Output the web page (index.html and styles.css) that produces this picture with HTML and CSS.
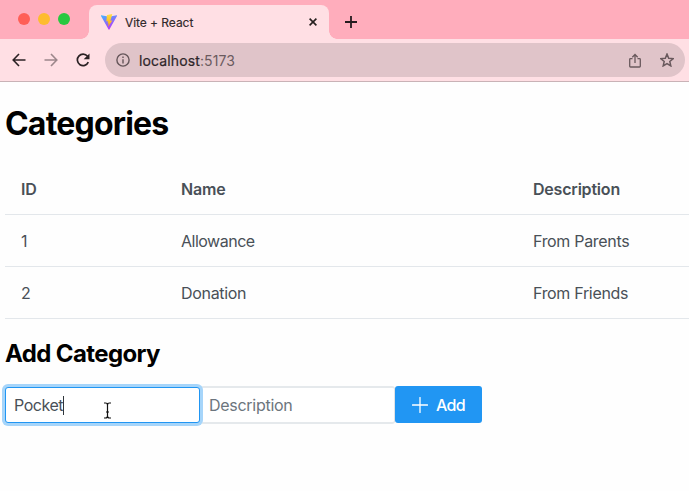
FILE: index.html
```html
<!DOCTYPE html>
<html lang="en">
<head>
<meta charset="utf-8">
<title>Vite + React</title>
<link rel="stylesheet" href="styles.css">
</head>
<body>
<header class="browser">
  <div class="tabstrip">
    <div class="lights"><i class="red"></i><i class="yellow"></i><i class="green"></i></div>
    <div class="tab">
      <svg class="favicon" width="16" height="16" viewBox="0 0 16 16">
        <defs><linearGradient id="v" x1="0" y1="0" x2=".5" y2="1"><stop stop-color="#41b8ff"/><stop offset="1" stop-color="#b837fc"/></linearGradient>
        <linearGradient id="b" x1="0" y1="0" x2="0" y2="1"><stop stop-color="#ffe04a"/><stop offset="1" stop-color="#ffa800"/></linearGradient></defs>
        <path fill="url(#v)" d="M.3 1.3 8 2.7l7.7-1.4c.3 0 .5.3.3.6L8.4 15.4c-.2.3-.6.3-.8 0L0 1.9c-.1-.3 0-.6.3-.6z"/>
        <path fill="url(#b)" d="M11.3.1 6 1.1 5.3 7.500l1.900-.3-.7 2.4 1.2-.3-.8 3.7 4.500-6.500-2 .3z"/>
      </svg>
      <span class="tab-title">Vite + React</span>
      <svg class="close" width="8" height="8" viewBox="0 0 8 8"><path d="M.6.6l6.8 6.8M7.4.6.6 7.4" stroke="#26201f" stroke-width="1.6"/></svg>
    </div>
    <svg class="new-tab" width="12" height="12" viewBox="0 0 12 12"><path d="M6 0v12M0 6h12" stroke="#251b1e" stroke-width="1.8"/></svg>
  </div>
  <div class="toolbar">
    <svg class="nav" width="14" height="14" viewBox="0 0 14 14"><path d="M13.5 7H1.5M7 1 1.2 7 7 13" fill="none" stroke="#2b2224" stroke-width="1.6"/></svg>
    <svg class="nav" width="14" height="14" viewBox="0 0 14 14"><path d="M.5 7h12M7 1l5.800 6L7 13" fill="none" stroke="#9c878b" stroke-width="1.6"/></svg>
    <svg class="nav" width="14" height="14" viewBox="0 0 14 14"><path d="M12.300 9.200A5.700 5.700 0 1 1 11.500 3.300" fill="none" stroke="#2b2224" stroke-width="1.7"/><path d="M13.500.5v5.800H7.700z" fill="#2b2224"/></svg>
    <div class="address">
      <svg width="14" height="14" viewBox="0 0 14 14"><circle cx="7" cy="7" r="6.100" fill="none" stroke="#65565a" stroke-width="1.400"/><path d="M7 6.200v4.300M7 3.500v1.400" stroke="#65565a" stroke-width="1.400"/></svg>
      <span class="url"><b>localhost</b>:5173</span>
      <svg class="share" width="12" height="15" viewBox="0 0 12 15"><path d="M3.500 5.600h-2a.8.800 0 0 0-.8.800v6.800c0 .5.300.800.800.800h9c.5 0 .8-.3.800-.8V6.400a.8.800 0 0 0-.8-.8h-2M6 10V1.500M3.300 4.200 6 1.500l2.700 2.700" fill="none" stroke="#69595d" stroke-width="1.300"/></svg>
      <svg width="14" height="14" viewBox="0 0 14 14"><path d="M7 1.100l1.700 4.100 4.500.4-3.400 2.900 1 4.400L7 10.600l-3.800 2.300 1-4.400L.8 5.600l4.500-.4z" fill="none" stroke="#69595d" stroke-width="1.500"/></svg>
    </div>
  </div>
</header>
<main class="page">
  <h1>Categories</h1>
  <table>
    <thead><tr><th class="id">ID</th><th class="name">Name</th><th>Description</th></tr></thead>
    <tbody>
      <tr><td>1</td><td class="tight">Allowance</td><td>From Parents</td></tr>
      <tr><td>2</td><td>Donation</td><td>From Friends</td></tr>
    </tbody>
  </table>
  <h2>Add Category</h2>
  <div class="form">
    <div class="field focused"><span>Pocket</span><i class="caret"></i>
      <svg class="pointer" width="9" height="17" viewBox="0 0 9 17"><path d="M1 1h1.500Q4.500 1 4.500 3v11q0 2-2 2H1M8 1H6.500Q4.500 1 4.500 3v11q0 2 2 2H8M3 10h3" fill="none" stroke="#fff" stroke-width="2.500"/><path d="M1 1h1.500Q4.500 1 4.500 3v11q0 2-2 2H1M8 1H6.500Q4.500 1 4.500 3v11q0 2 2 2H8M3 10h3" fill="none" stroke="#111" stroke-width="1.200"/></svg>
    </div>
    <div class="field placeholder"><span>Description</span></div>
    <button class="add"><svg width="16" height="16" viewBox="0 0 16 16"><path d="M8 .5v15M.5 8h15" stroke="#fff" stroke-width="1.300" stroke-linecap="round"/></svg><span>Add</span></button>
  </div>
</main>
</body>
</html>
```
FILE: styles.css
```css
* { box-sizing: border-box; }
body { margin: 0; width: 689px; height: 491px; overflow: hidden; background: #fefefe; font-family: Inter, "Liberation Sans", sans-serif; }
svg { display: block; flex: none; }
.browser { height: 82px; background: #ffdfe4; border-bottom: 1px solid #c9b2b6; }
.tabstrip { display: flex; height: 39px; background: #ffadbc; }
.lights { display: flex; gap: 8px; padding: 12px 0 0 18px; width: 89px; }
.lights i { width: 12px; height: 12px; margin-top: .5px; border-radius: 50%; }
.red { background: #ff5f57; }
.yellow { background: #febc2e; }
.green { background: #28c840; }
.tab { position: relative; display: flex; align-items: center; width: 240px; height: 34px; margin-top: 5px; padding: 0 12px; border-radius: 8px 8px 0 0; background: #ffdfe4; }
.tab::before, .tab::after { content: ""; position: absolute; bottom: 0; width: 8px; height: 8px; }
.tab::before { left: -8px; background: radial-gradient(circle at 0 0, #ffadbc 7.500px, #ffdfe4 8px); }
.tab::after { right: -8px; background: radial-gradient(circle at 100% 0, #ffadbc 7.500px, #ffdfe4 8px); }
.tab-title { margin-left: 8px; font-size: 12px; letter-spacing: -.05px; color: #30282a; -webkit-text-stroke: .15px #30282a; }
.close { margin-left: auto; }
.new-tab { margin: 16px 0 0 16px; }
.toolbar { display: flex; align-items: center; height: 42px; padding: 0 4px 0 12px; }
.nav { margin-right: 18px; }
.nav:nth-child(3) { margin-right: 15px; }
.address { display: flex; align-items: center; flex: 1; height: 34px; padding: 0 11px; border-radius: 17px; background: #e0c4c9; }
.url { margin-left: 9px; font-size: 14px; letter-spacing: .12px; color: #6b5b5f; }
.url b { font-weight: 400; color: #2e2629; -webkit-text-stroke: .2px #2e2629; }
.share { margin: 0 19px 0 auto; }
.page { padding: 22px 0 0 5px; }
h1 { margin: 0 0 20px; font-size: 32px; line-height: 39px; font-weight: 700; letter-spacing: -.8px; color: #000; }
table { width: 100%; table-layout: fixed; border-collapse: separate; border-spacing: 0; font-size: 16px; line-height: 19px; color: #495057; }
th, td { height: 52px; padding: 2px 16px 0; text-align: left; border-bottom: 1px solid #e3e7eb; }
th { font-weight: 600; letter-spacing: -.2px; }
td { letter-spacing: -.32px; }
.tight { letter-spacing: -.5px; }
.id { width: 160px; }
.name { width: 352px; }
h2 { margin: 20px 0 18px; font-size: 24px; line-height: 29px; font-weight: 700; letter-spacing: -.62px; color: #000; }
.form { display: flex; align-items: flex-start; height: 38px; font-size: 16px; letter-spacing: -.28px; color: #495057; }
.field { position: relative; display: flex; align-items: center; width: 195px; height: 38px; padding: 0 8px; border: 1px solid #dfe3e7; border-width: 2px 1px; border-color: #e5e9ec #dfe3e7; border-radius: 3px; background: #fff; }
.focused { z-index: 1; height: 36px; margin-top: 1px; border: 1px solid #2196f3; letter-spacing: -.45px; box-shadow: 0 0 0 3px #a6d5fa; }
.placeholder { color: #6c757d; }
.caret { width: 1px; height: 19px; background: #30363b; }
.pointer { position: absolute; left: 97px; top: 14px; }
.add { display: flex; align-items: center; gap: 8px; width: 87px; height: 37px; padding: 0 17px; border: 0; border-radius: 3px; background: #2196f3; color: #fff; font: 500 16px Inter, "Liberation Sans", sans-serif; letter-spacing: -.7px; }
```
